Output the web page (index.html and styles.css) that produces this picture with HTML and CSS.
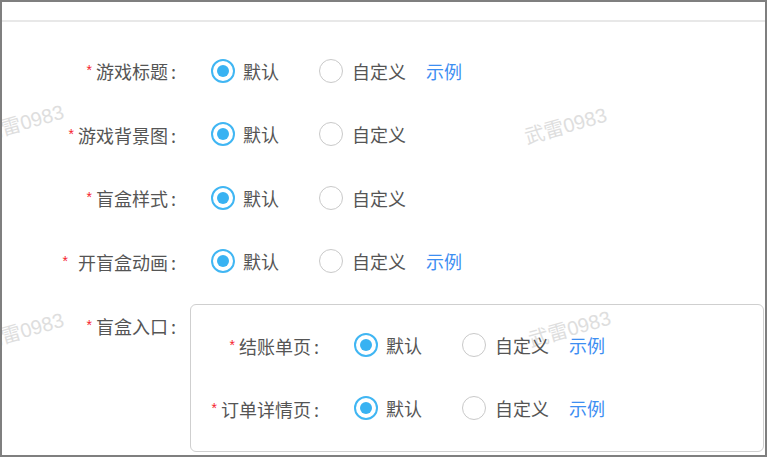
FILE: index.html
```html
<!DOCTYPE html>
<html lang="zh-CN">
<head>
<meta charset="utf-8">
<title>盲盒设置</title>
<link rel="stylesheet" href="styles.css">
</head>
<body>
<div class="frame">
  <div class="topbar"></div>
  <div class="form">
    <div class="row">
      <div class="label"><span class="req">*</span>游戏标题<span class="colon">:</span></div>
      <div class="radio checked"><span class="dot"></span><span class="rtext">默认</span></div>
      <div class="radio"><span class="dot"></span><span class="rtext">自定义</span></div>
      <a class="link">示例</a>
    </div>
    <div class="row">
      <div class="label"><span class="req">*</span>游戏背景图<span class="colon">:</span></div>
      <div class="radio checked"><span class="dot"></span><span class="rtext">默认</span></div>
      <div class="radio"><span class="dot"></span><span class="rtext">自定义</span></div>
    </div>
    <div class="row">
      <div class="label"><span class="req">*</span>盲盒样式<span class="colon">:</span></div>
      <div class="radio checked"><span class="dot"></span><span class="rtext">默认</span></div>
      <div class="radio"><span class="dot"></span><span class="rtext">自定义</span></div>
    </div>
    <div class="row">
      <div class="label"><span class="req req-spaced">*</span>开盲盒动画<span class="colon">:</span></div>
      <div class="radio checked"><span class="dot"></span><span class="rtext">默认</span></div>
      <div class="radio"><span class="dot"></span><span class="rtext">自定义</span></div>
      <a class="link">示例</a>
    </div>
    <div class="entry">
      <div class="label entry-label"><span class="req">*</span>盲盒入口<span class="colon">:</span></div>
      <div class="box">
        <div class="row inner-row">
          <div class="label inner-label"><span class="req">*</span>结账单页<span class="colon">:</span></div>
          <div class="radio checked"><span class="dot"></span><span class="rtext">默认</span></div>
          <div class="radio"><span class="dot"></span><span class="rtext">自定义</span></div>
          <a class="link">示例</a>
        </div>
        <div class="row inner-row">
          <div class="label inner-label"><span class="req">*</span>订单详情页<span class="colon">:</span></div>
          <div class="radio checked"><span class="dot"></span><span class="rtext">默认</span></div>
          <div class="radio"><span class="dot"></span><span class="rtext">自定义</span></div>
          <a class="link">示例</a>
        </div>
      </div>
    </div>
  </div>
  <div class="wm wm-1">武雷0983</div>
  <div class="wm wm-2">武雷0983</div>
  <div class="wm wm-3">武雷0983</div>
  <div class="wm wm-4">武雷0983</div>
</div>
</body>
</html>
```
FILE: styles.css
```css
html, body {
  margin: 0;
  padding: 0;
  background: #ffffff;
}

body {
  font-family: "Noto Sans CJK SC", "Noto Sans", sans-serif;
  color: #555555;
}

.frame {
  position: relative;
  width: 767px;
  height: 457px;
  box-sizing: border-box;
  border: 2px solid #7f7f7f;
  overflow: hidden;
  background: #ffffff;
}

.topbar {
  height: 18px;
  border-bottom: 2px solid #e8e8e8;
}

.form {
  position: relative;
  z-index: 1;
  padding-top: 28.5px;
}

.row {
  display: flex;
  align-items: center;
  height: 40px;
  margin-bottom: 23.5px;
  font-size: 18px;
  line-height: 40px;
}

.label {
  width: 174px;
  margin-right: 35px;
  text-align: right;
  white-space: nowrap;
  color: #555555;
  font-size: 18px;
}

.req {
  color: #f5222d;
  font-size: 14px;
  margin-right: 4px;
  vertical-align: 4px;
  font-family: "Liberation Sans", sans-serif;
}

.req-spaced {
  margin-right: 10px;
}

.colon {
  margin-left: 3px;
}

.radio {
  display: flex;
  align-items: center;
  margin-right: 40px;
}

.radio + .radio {
  margin-right: 20px;
}

.dot {
  position: relative;
  width: 24px;
  height: 24px;
  box-sizing: border-box;
  border: 1.5px solid #c9c9c9;
  border-radius: 50%;
  background: #ffffff;
  flex: none;
}

.checked .dot {
  border: 2px solid #40b6f3;
}

.checked .dot::after {
  content: "";
  position: absolute;
  left: 4px;
  top: 4px;
  width: 12px;
  height: 12px;
  border-radius: 50%;
  background: #38b2f2;
}

.rtext {
  margin-left: 8px;
  color: #555555;
}

.radio + .radio .rtext {
  margin-left: 9px;
}

.link {
  color: #3d8ef2;
  cursor: pointer;
}

.entry {
  display: flex;
  align-items: flex-start;
}

.entry-label {
  line-height: 40px;
  height: 40px;
  margin-right: 14px;
}

.box {
  flex: 1;
  margin-top: -1px;
  margin-right: 1px;
  height: 148px;
  box-sizing: border-box;
  border: 1.5px solid #cfcfcf;
  border-radius: 6px;
  padding-top: 20.5px;
}

.inner-row {
  margin-bottom: 23px;
}

.inner-label {
  width: 128px;
  margin-right: 35px;
}

.wm {
  position: absolute;
  font-family: "Liberation Sans", "Noto Sans CJK SC", sans-serif;
  font-size: 20px;
  color: #dedede;
  white-space: nowrap;
  transform: rotate(-16deg);
  transform-origin: center;
  pointer-events: none;
  z-index: 0;
}

.wm-1 { left: -22px; top: 105px; }
.wm-2 { left: 521px; top: 108px; }
.wm-3 { left: -22px; top: 313px; }
.wm-4 { left: 525px; top: 311px; }
```
